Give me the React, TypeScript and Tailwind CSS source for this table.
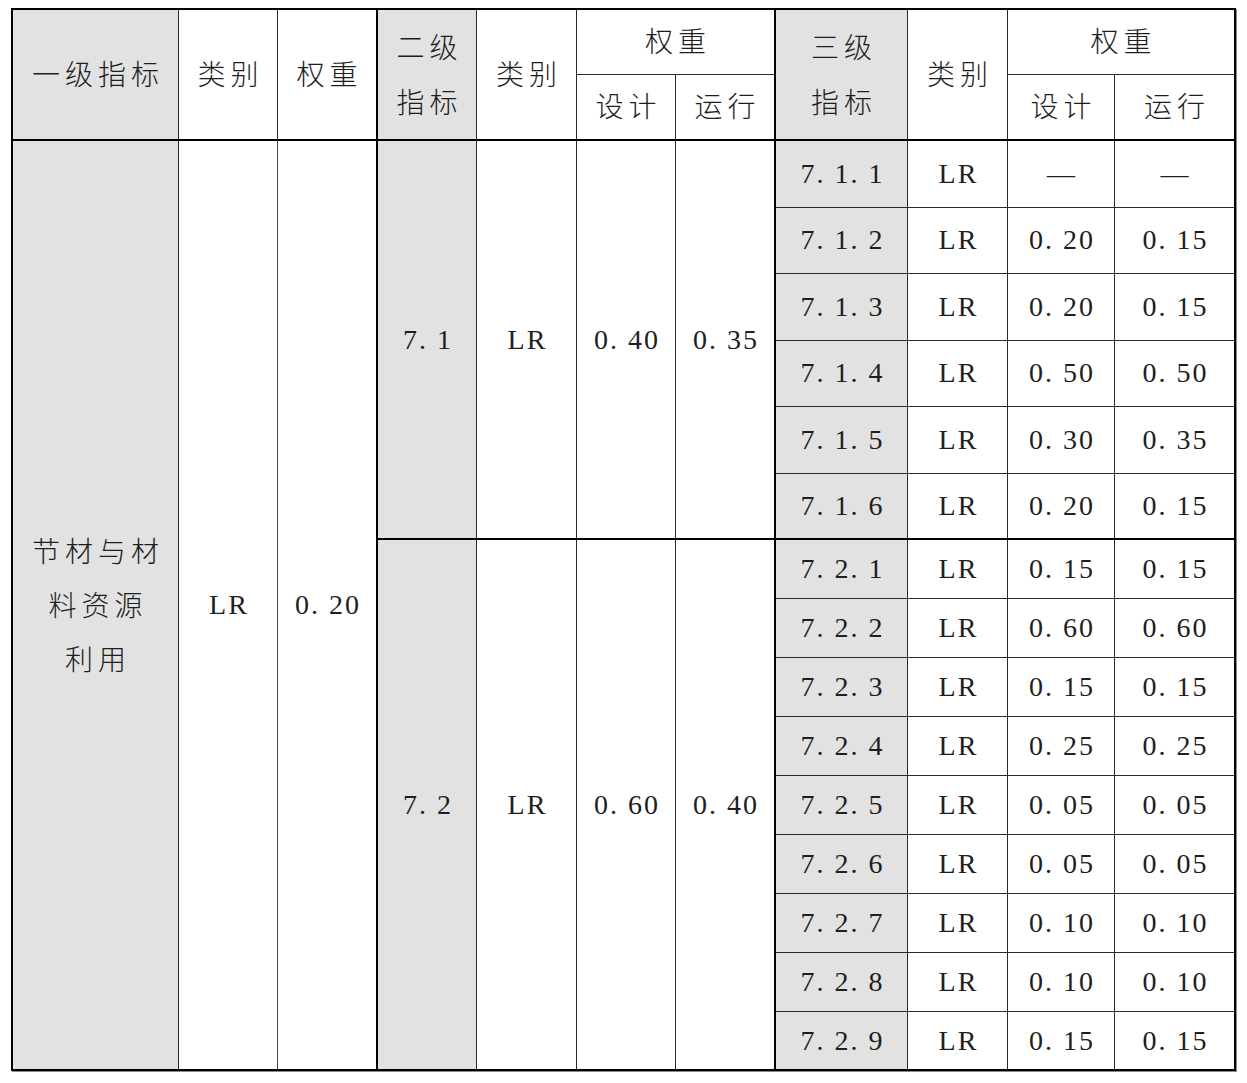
import React from 'react';

const rows71 = [
    ['7. 1. 1', '—', '—'],
    ['7. 1. 2', '0. 20', '0. 15'],
    ['7. 1. 3', '0. 20', '0. 15'],
    ['7. 1. 4', '0. 50', '0. 50'],
    ['7. 1. 5', '0. 30', '0. 35'],
    ['7. 1. 6', '0. 20', '0. 15'],
];

const rows72 = [
    ['7. 2. 1', '0. 15', '0. 15'],
    ['7. 2. 2', '0. 60', '0. 60'],
    ['7. 2. 3', '0. 15', '0. 15'],
    ['7. 2. 4', '0. 25', '0. 25'],
    ['7. 2. 5', '0. 05', '0. 05'],
    ['7. 2. 6', '0. 05', '0. 05'],
    ['7. 2. 7', '0. 10', '0. 10'],
    ['7. 2. 8', '0. 10', '0. 10'],
    ['7. 2. 9', '0. 15', '0. 15'],
];

// base cell: right and bottom rules, text centred
const c = 'flex items-center justify-center text-center border-r border-b border-[#2a2a2a]';
const grey = 'bg-[#e2e2e2]';
const zh = 'tracking-[5px] pl-[5px] font-light';
const num = 'tracking-[2px] pl-[2px]';
const thickR = 'border-r-2 border-r-black';
const thickB = 'border-b-2 border-b-black';

const App = () => {
    return (
        <div className="w-[1247px] h-[1083px] bg-white pt-[8px] pl-[11px] text-[#1e1e1e] text-[28px] leading-none font-['Liberation_Serif','Noto_Sans_CJK_SC',serif]">
            <div className="grid w-[1225px] grid-cols-[166px_99px_100px_99px_100px_99px_100px_132px_100px_107px_1fr] grid-rows-[65px_66px_repeat(6,66.5px)_repeat(8,59px)_57px] border-2 border-black shadow-[1px_1px_0_#888]">
                {/* header */}
                <div className={`${c} ${grey} ${zh} row-span-2 ${thickB} pt-[2px]`}>一级指标</div>
                <div className={`${c} ${zh} row-span-2 ${thickB} pt-[2px]`}>类别</div>
                <div className={`${c} ${zh} row-span-2 ${thickB} ${thickR} pt-[2px]`}>权重</div>
                <div className={`${c} ${grey} ${zh} row-span-2 ${thickB} flex-col gap-[27px] pt-[3px]`}>
                    <span>二级</span>
                    <span>指标</span>
                </div>
                <div className={`${c} ${zh} row-span-2 ${thickB} pt-[2px]`}>类别</div>
                <div className={`${c} ${zh} col-span-2 ${thickR} pt-[2px]`}>权重</div>
                <div className={`${c} ${grey} ${zh} row-span-2 ${thickB} flex-col gap-[27px] pt-[3px]`}>
                    <span>三级</span>
                    <span>指标</span>
                </div>
                <div className={`${c} ${zh} row-span-2 ${thickB} pt-[2px]`}>类别</div>
                <div className={`${c} ${zh} col-span-2 border-r-0 pt-[2px]`}>权重</div>
                <div className={`${c} ${zh} ${thickB} pt-[2px]`}>设计</div>
                <div className={`${c} ${zh} ${thickB} ${thickR} pt-[2px]`}>运行</div>
                <div className={`${c} ${zh} ${thickB} pt-[2px]`}>设计</div>
                <div className={`${c} ${zh} ${thickB} border-r-0 pt-[2px]`}>运行</div>

                {/* 7.1 group */}
                {rows71.map((r, i) => {
                    const last = i === rows71.length - 1 ? thickB : '';
                    return (
                        <React.Fragment key={r[0]}>
                            {i === 0 && (
                                <>
                                    <div className={`${c} ${grey} ${zh} row-span-15 border-b-0 flex-col gap-[26px] pt-[4px]`}>
                                        <span>节材与材</span>
                                        <span>料资源</span>
                                        <span>利用</span>
                                    </div>
                                    <div className={`${c} ${num} row-span-15 border-b-0 border-r-[1.5px] border-r-[#444]`}>LR</div>
                                    <div className={`${c} ${num} row-span-15 border-b-0 ${thickR}`}>0. 20</div>
                                    <div className={`${c} ${grey} ${num} row-span-6 ${thickB}`}>7. 1</div>
                                    <div className={`${c} ${num} row-span-6 ${thickB}`}>LR</div>
                                    <div className={`${c} ${num} row-span-6 ${thickB}`}>0. 40</div>
                                    <div className={`${c} ${num} row-span-6 ${thickB} ${thickR}`}>0. 35</div>
                                </>
                            )}
                            <div className={`${c} ${grey} ${num} ${last}`}>{r[0]}</div>
                            <div className={`${c} ${num} ${last}`}>LR</div>
                            <div className={`${c} ${num} ${last}`}>{r[1]}</div>
                            <div className={`${c} ${num} ${last} border-r-0`}>{r[2]}</div>
                        </React.Fragment>
                    );
                })}

                {/* 7.2 group */}
                {rows72.map((r, i) => {
                    const last = i === rows72.length - 1 ? 'border-b-0' : '';
                    return (
                        <React.Fragment key={r[0]}>
                            {i === 0 && (
                                <>
                                    <div className={`${c} ${grey} ${num} row-span-9 border-b-0`}>7. 2</div>
                                    <div className={`${c} ${num} row-span-9 border-b-0`}>LR</div>
                                    <div className={`${c} ${num} row-span-9 border-b-0`}>0. 60</div>
                                    <div className={`${c} ${num} row-span-9 border-b-0 ${thickR}`}>0. 40</div>
                                </>
                            )}
                            <div className={`${c} ${grey} ${num} ${last}`}>{r[0]}</div>
                            <div className={`${c} ${num} ${last}`}>LR</div>
                            <div className={`${c} ${num} ${last}`}>{r[1]}</div>
                            <div className={`${c} ${num} ${last} border-r-0`}>{r[2]}</div>
                        </React.Fragment>
                    );
                })}
            </div>
        </div>
    );
};

export default App;
